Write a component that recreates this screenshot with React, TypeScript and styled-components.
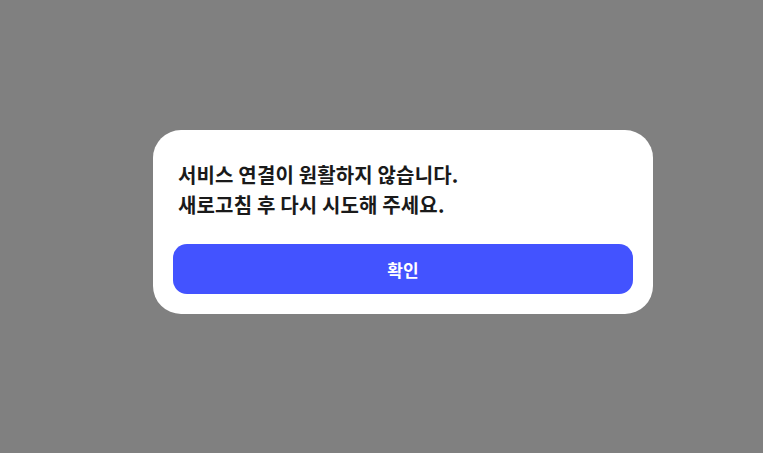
import React from "react";
import styled, { createGlobalStyle } from "styled-components";

const GlobalStyle = createGlobalStyle`
    html, body {
        margin: 0;
        padding: 0;
        height: 100%;
    }
    body {
        font-family: "Noto Sans CJK KR", "Noto Sans", sans-serif;
    }
    #root {
        height: 100%;
    }
`;

const Overlay = styled.div`
    width: 100%;
    height: 100%;
    box-sizing: border-box;
    padding: 0 0 9px 43px;
    background-color: #808080;
    display: flex;
    justify-content: center;
    align-items: center;
`;

const Dialog = styled.div`
    width: 500px;
    box-sizing: border-box;
    padding: 30px 20px 20px;
    background-color: #ffffff;
    border-radius: 28px;
    display: flex;
    flex-direction: column;
    gap: 24px;
`;

const Message = styled.p`
    margin: 0;
    padding: 0 5px;
    font-size: 20px;
    font-weight: 700;
    line-height: 30px;
    letter-spacing: 0.15px;
    color: #1a1a1a;
`;

const ConfirmButton = styled.button`
    width: 100%;
    height: 50px;
    border: none;
    border-radius: 14px;
    background-color: #4353ff;
    color: #ffffff;
    font-family: inherit;
    font-size: 17px;
    font-weight: 700;
    cursor: pointer;
`;

const App = () => {
    return (
        <>
            <GlobalStyle />
            <Overlay>
                <Dialog>
                    <Message>
                        서비스 연결이 원활하지 않습니다.
                        <br />
                        새로고침 후 다시 시도해 주세요.
                    </Message>
                    <ConfirmButton>확인</ConfirmButton>
                </Dialog>
            </Overlay>
        </>
    );
};

export default App;
